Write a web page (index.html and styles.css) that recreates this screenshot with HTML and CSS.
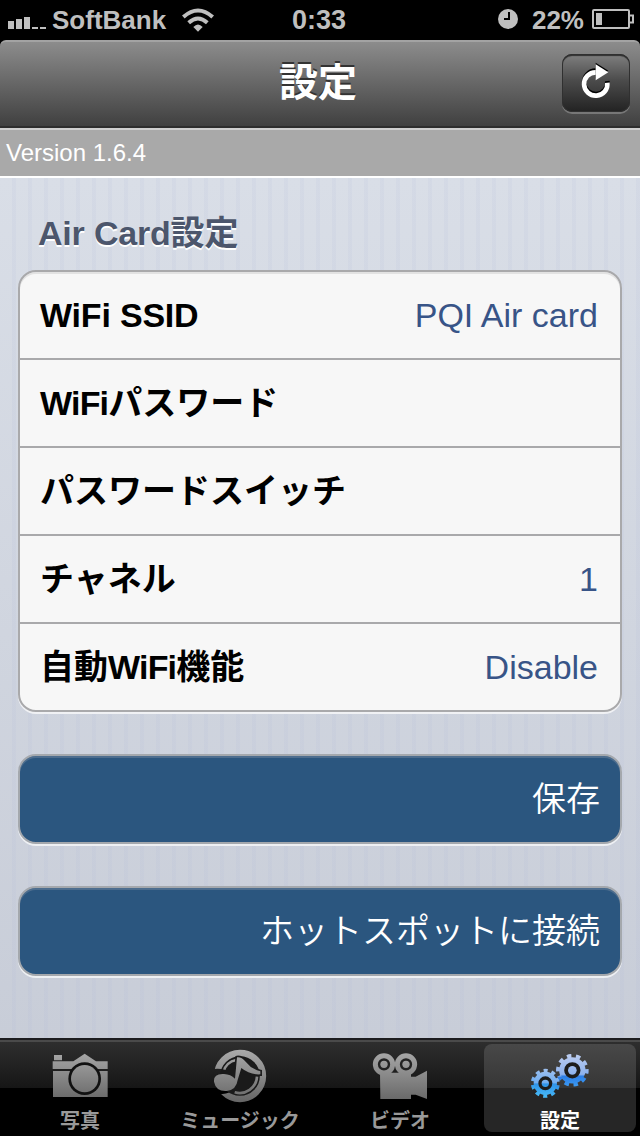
FILE: index.html
```
<!DOCTYPE html>
<html lang="ja">
<head>
    <meta charset="UTF-8">
    <title>設定</title>
    <link rel="stylesheet" href="styles.css">
</head>
<body>
    <div class="status-bar">
        <div class="status-left">
            <svg class="signal" width="38" height="12" viewBox="0 0 38 12">
                <path d="M0 4h6v8H0zM8 2h6v10H8zM16 0h6v12h-6zM24 10h6v2h-6zM32 10h6v2h-6z" fill="#bfbfbf"/>
            </svg>
            <span class="carrier">SoftBank</span>
            <svg class="wifi" width="32" height="24" viewBox="0 0 96 72">
                <path d="M4 27Q48-12 92 27" fill="none" stroke="#bfbfbf" stroke-width="12"/>
                <path d="M20 44Q48 19 76 44" fill="none" stroke="#bfbfbf" stroke-width="12"/>
                <path d="M34 57Q48 42 62 57L48 71z" fill="#bfbfbf"/>
            </svg>
        </div>
        <span class="clock">0:33</span>
        <div class="status-right">
            <svg width="20" height="20" viewBox="0 0 20 20">
                <circle cx="10" cy="10" r="10" fill="#bfbfbf"/>
                <path d="M11 3v7H6" fill="none" stroke="#000" stroke-width="2"/>
            </svg>
            <span class="percent">22%</span>
            <svg width="42" height="20" viewBox="0 0 42 20">
                <rect x="1" y="1" width="36" height="18" rx="1" fill="none" stroke="#bfbfbf" stroke-width="2"/>
                <path d="M38 6.5h3v7h-3" fill="none" stroke="#bfbfbf" stroke-width="2"/>
                <path d="M4 4h6v12H4z" fill="#bfbfbf"/>
            </svg>
        </div>
    </div>

    <div class="nav-bar">
        <h1>設定</h1>
        <button class="refresh">
            <svg width="68" height="58" viewBox="0 0 204 174">
                <g fill="#000" transform="translate(0 -5)">
                    <path d="M136 86A35 35 0 1 1 101 55" fill="none" stroke="#000" stroke-width="14"/>
                    <path d="M101 31l38 24-38 24z"/>
                </g>
                <path d="M136 86A35 35 0 1 1 101 55" fill="none" stroke="#fff" stroke-width="14"/>
                <path d="M101 31l38 24-38 24z" fill="#fff"/>
            </svg>
        </button>
    </div>

    <div class="version">Version 1.6.4</div>

    <div class="content">
        <h2><span class="latin">Air Card</span>設定</h2>
        <div class="group">
            <div class="row"><span class="label latin">WiFi SSID</span><span class="value">PQI Air card</span></div>
            <div class="row"><span class="label"><span class="wifi-word">WiFi</span>パスワード</span></div>
            <div class="row"><span class="label">パスワードスイッチ</span></div>
            <div class="row"><span class="label">チャネル</span><span class="value">1</span></div>
            <div class="row"><span class="label">自動<span class="wifi-word">WiFi</span>機能</span><span class="value">Disable</span></div>
        </div>
        <button class="action">保存</button>
        <button class="action">ホットスポットに接続</button>
    </div>

    <div class="tab-bar">
        <div class="tab">
            <svg width="60" height="60" viewBox="150 48 180 180">
                <defs>
                    <linearGradient id="gray" gradientUnits="userSpaceOnUse" x1="0" y1="60" x2="0" y2="216">
                        <stop offset="0" stop-color="#aaa"/>
                        <stop offset="1" stop-color="#666"/>
                    </linearGradient>
                </defs>
                <path d="M162 75h24v16h-24zM158 94h62l34-23 34 23h35v23H158zM159 123h164v78H159z" fill="url(#gray)"/>
                <circle cx="254" cy="146" r="49" fill="#111"/>
                <circle cx="254" cy="146" r="41" fill="url(#gray)"/>
            </svg>
            <span>写真</span>
        </div>
        <div class="tab">
            <svg width="60" height="60" viewBox="150 48 180 180">
                <defs>
                    <path id="note" d="M231 82Q244 80 257 95Q274 117 301 124V133Q270 135 244 114L233 150Q229 180 200 183Q168 185 162 155Q160 130 192 132Q212 133 225 146z"/>
                    <!-- cuts the rings back around the note -->
                    <mask id="gap" maskUnits="userSpaceOnUse" x="150" y="48" width="180" height="180">
                        <rect x="150" y="48" width="180" height="180" fill="#fff"/>
                        <use href="#note" fill="#000" stroke="#000" stroke-width="10"/>
                        <path d="M150 119Q185 110 215 128V184Q200 192 176 194H150z"/>
                    </mask>
                </defs>
                <circle cx="240" cy="138" r="60" fill="#1a1a1a"/>
                <g mask="url(#gap)" fill="none" stroke="url(#gray)">
                    <circle cx="240" cy="138" r="69" stroke-width="19"/>
                    <path d="M190 126A50 50 0 0 1 229 90" stroke-width="7"/>
                    <path d="M291 140A52 52 0 0 1 224 187" stroke-width="8"/>
                </g>
                <use href="#note" fill="url(#gray)"/>
            </svg>
            <span>ミュージック</span>
        </div>
        <div class="tab">
            <svg width="60" height="60" viewBox="150 48 180 180">
                <path d="M180 128h93v12h14l34-18v85l-34-13h-14v13h-92z" fill="url(#gray)"/>
                <circle cx="192" cy="103" r="26" fill="#222" stroke="url(#gray)" stroke-width="15"/>
                <circle cx="258" cy="103" r="26" fill="#222" stroke="url(#gray)" stroke-width="15"/>
                <circle cx="192" cy="103" r="11" fill="url(#gray)"/>
                <circle cx="258" cy="103" r="11" fill="url(#gray)"/>
            </svg>
            <span>ビデオ</span>
        </div>
        <div class="tab active">
            <svg width="60" height="60" viewBox="150 48 180 180">
                <defs>
                    <linearGradient id="blue1" gradientUnits="userSpaceOnUse" x1="0" y1="116" x2="0" y2="204">
                        <stop offset="0" stop-color="#9fc0ee"/>
                        <stop offset=".48" stop-color="#72aef0"/>
                        <stop offset=".52" stop-color="#2f93e8"/>
                        <stop offset="1" stop-color="#49bdf8"/>
                    </linearGradient>
                    <linearGradient id="blue2" gradientUnits="userSpaceOnUse" x1="0" y1="73" x2="0" y2="170">
                        <stop offset="0" stop-color="#bccdf0"/>
                        <stop offset=".62" stop-color="#8db2ee"/>
                        <stop offset=".68" stop-color="#2c7ee6"/>
                        <stop offset="1" stop-color="#3c9bf2"/>
                    </linearGradient>
                </defs>
                <g fill="#1c1c1c" stroke="url(#blue1)">
                    <circle cx="196" cy="160" r="28" stroke-width="14"/>
                    <circle cx="196" cy="160" r="38" fill="none" stroke-width="11" pathLength="20" stroke-dasharray="1 1" transform="rotate(9 196 160)"/>
                </g>
                <circle cx="196" cy="160" r="11" fill="url(#blue1)"/>
                <g fill="#1c1c1c" stroke="url(#blue2)">
                    <circle cx="277" cy="121" r="32" stroke-width="15"/>
                    <circle cx="277" cy="121" r="43" fill="none" stroke-width="12" pathLength="20" stroke-dasharray="1 1" transform="rotate(-5 277 121)"/>
                </g>
                <circle cx="277" cy="121" r="13" fill="url(#blue2)"/>
            </svg>
            <span>設定</span>
        </div>
    </div>
</body>
</html>
```
FILE: styles.css
```
* {
    box-sizing: border-box;
}

body {
    margin: 0;
    width: 640px;
    height: 1136px;
    display: flex;
    flex-direction: column;
    overflow: hidden;
    background-color: #000;
    font-family: "Liberation Sans", "Noto Sans CJK JP", sans-serif;
}

button {
    border: none;
    padding: 0;
    font-family: inherit;
}

.status-bar {
    height: 40px;
    display: grid;
    grid-template-columns: 1fr auto 1fr;
    align-items: center;
    padding: 0 6px 0 8px;
    color: #bfbfbf;
    font-size: 26px;
    font-weight: bold;
}

.status-left,
.status-right {
    display: flex;
    align-items: center;
}

.status-right {
    justify-content: flex-end;
    gap: 8px;
}

.status-right svg {
    margin-bottom: 2px;
}

.signal {
    margin: 6px 6px 0 0;
}

.wifi {
    margin-left: 16px;
}

.clock {
    margin-right: 4px;
    font-size: 27px;
}

.percent {
    margin-left: 6px;
}

.nav-bar {
    height: 88px;
    display: grid;
    grid-template-columns: 78px 1fr 78px;
    align-items: start;
    border-top: 2px solid #a3a3a3;
    border-bottom: 2px solid #2d2d2d;
    border-radius: 6px 6px 0 0;
    background: linear-gradient(#8c8c8c, #404040);
}

.nav-bar h1 {
    grid-column: 2;
    margin: 0 4px 0 0;
    text-align: center;
    color: #fff;
    font-size: 39px;
    line-height: 82px;
    text-shadow: 0 -2px 0 #333;
}

.refresh {
    width: 68px;
    height: 58px;
    margin-top: 12px;
    border-radius: 10px;
    background: linear-gradient(#808080, #4c4c4c 45%, #222);
    box-shadow: inset 0 0 0 1px #303030, inset 0 2px 1px #303030, 0 2px 0 #777;
}

.refresh svg {
    display: block;
}

.version {
    height: 50px;
    padding-left: 6px;
    border-top: 2px solid #cfcfcf;
    border-bottom: 2px solid #fff;
    background-color: #a9a9a9;
    color: #fff;
    font-size: 24px;
    line-height: 46px;
}

.content {
    height: 860px;
    padding: 32px 18px 0;
    background: repeating-linear-gradient(90deg, transparent 0 12px, rgba(170, 180, 215, 0.11) 12px 16px), linear-gradient(#d9dee7, #c8cdd8);
}

.content h2 {
    height: 60px;
    margin: 0;
    padding-left: 20px;
    color: #4c566c;
    font-size: 34px;
    line-height: 46px;
    text-shadow: 0 2px 0 #fff;
}

.latin {
    letter-spacing: -0.2px;
}

.wifi-word {
    letter-spacing: -0.8px;
}

.group {
    border: 2px solid #a9a9ab;
    border-radius: 18px;
    background-color: #f7f7f7;
    box-shadow: 0 2px 0 #f0f1f4, inset 0 2px 0 #e2e2e2;
}

.row {
    height: 88px;
    display: flex;
    justify-content: space-between;
    padding: 0 22px 0 20px;
    border-bottom: 2px solid #a9a9ab;
    font-size: 34px;
    line-height: 86px;
    color: #000;
}

.row:last-child {
    height: 86px;
    border-bottom: none;
}

.label {
    font-weight: bold;
}

.value {
    color: #385487;
}

.action {
    display: block;
    width: 604px;
    height: 90px;
    margin-top: 42px;
    padding: 0 20px;
    border: 2px solid #a4a8ad;
    border-radius: 18px;
    background-color: #2b567f;
    box-shadow: 0 2px 0 #eef0f3, inset 0 2px 0 #4d6d8e;
    color: #fff;
    font-size: 34px;
    font-weight: 350;
    line-height: 84px;
    text-align: right;
}

.tab-bar {
    height: 98px;
    display: flex;
    border-top: 2px solid #1c1c1f;
    background: linear-gradient(#4a4a4a 0 2px, #2e2e2e 2px, #161616 48px, #000 48px);
}

.tab {
    width: 160px;
    display: flex;
    flex-direction: column;
    align-items: center;
    padding-top: 6px;
    color: #999;
    font-size: 20px;
    font-weight: bold;
    line-height: 30px;
}

.tab svg {
    flex: none;
}

.active {
    width: 152px;
    height: 88px;
    margin: 4px;
    padding-top: 2px;
    border-radius: 8px;
    background: linear-gradient(#484848, #363636 44px, #262626 44px);
    color: #fff;
}
```
